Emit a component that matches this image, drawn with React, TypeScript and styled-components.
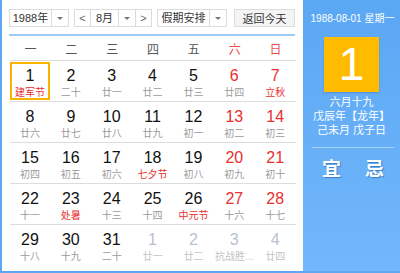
import React from 'react';
import styled, { createGlobalStyle } from 'styled-components';

const GlobalStyle = createGlobalStyle`
  html, body {
    margin: 0;
    padding: 0;
    background: #fff;
  }
  * {
    box-sizing: border-box;
  }
`;

const FONT = `"Liberation Sans", "Noto Sans CJK SC", sans-serif`;

const StyledWrapper = styled.div`
  display: flex;
  width: 400px;
  height: 273px;
  border-left: 2px solid #5ea8f3;
  border-bottom: 2px solid #5ea8f3;
  font-family: ${FONT};
  overflow: hidden;
`;

const StyledMain = styled.div`
  flex: 0 0 301px;
  background: #fff;
  padding: 9px 6px 0 7px;
`;

const StyledToolbar = styled.div`
  display: flex;
  align-items: center;
  height: 18px;
`;

const StyledSelect = styled.div<{ $width: number }>`
  display: flex;
  width: ${(p) => p.$width}px;
  height: 18px;
  margin-right: 5px;
  border: 1px solid #dcdcdc;
  background: #fff;
  font-size: 11px;
  color: #333;
`;

const StyledSelectText = styled.div`
  flex: 1;
  display: flex;
  align-items: center;
  justify-content: center;
  line-height: 16px;
`;

const StyledArrow = styled.div`
  flex: 0 0 17px;
  display: flex;
  align-items: center;
  justify-content: center;
  border-left: 1px solid #dcdcdc;
  &::after {
    content: '';
    border-left: 3px solid transparent;
    border-right: 3px solid transparent;
    border-top: 3px solid #777;
  }
`;

const StyledStep = styled.div<{ $side: 'left' | 'right' }>`
  flex: 0 0 16px;
  display: flex;
  align-items: center;
  justify-content: center;
  ${(p) => (p.$side === 'left' ? 'border-right' : 'border-left')}: 1px solid #dcdcdc;
  color: #666;
`;

const StyledButton = styled.div`
  width: 61px;
  height: 18px;
  margin-left: 2px;
  border: 1px solid #dcdcdc;
  background: #f4f4f4;
  font-size: 11px;
  color: #333;
  display: flex;
  align-items: center;
  justify-content: center;
`;

const StyledDivider = styled.div`
  width: 286px;
  height: 2px;
  margin-top: 7px;
  background: #9ecbf5;
`;

const StyledGrid = styled.div`
  display: grid;
  grid-template-columns: repeat(7, 1fr);
  width: 286px;
  margin-left: 1px;
`;

const StyledWeekday = styled.div<{ $weekend: boolean }>`
  height: 24px;
  display: flex;
  align-items: center;
  justify-content: center;
  font-size: 12px;
  color: ${(p) => (p.$weekend ? '#e8504f' : '#555')};
`;

const StyledWeekRow = styled.div`
  grid-column: 1 / -1;
  display: grid;
  grid-template-columns: repeat(7, 1fr);
  border-top: 1px solid #dcdcdc;
  height: 41px;
  padding-top: 1px;
`;

const StyledDay = styled.div<{ $selected: boolean }>`
  width: 40px;
  height: 38px;
  border: 2px solid ${(p) => (p.$selected ? '#f9b400' : 'transparent')};
  display: flex;
  flex-direction: column;
  align-items: center;
  padding-top: 3px;
`;

const StyledDayNumber = styled.div<{ $tone: 'normal' | 'red' | 'other' }>`
  font-size: 16px;
  line-height: 18px;
  color: ${(p) => (p.$tone === 'red' ? '#e8302e' : p.$tone === 'other' ? '#b9c2cc' : '#111')};
`;

const StyledLunar = styled.div<{ $tone: 'normal' | 'red' | 'other' }>`
  font-size: 10px;
  line-height: 13px;
  margin-top: 1px;
  white-space: nowrap;
  color: ${(p) => (p.$tone === 'red' ? '#e8302e' : p.$tone === 'other' ? '#c4c4c4' : '#9a9a9a')};
`;

const StyledSide = styled.div`
  flex: 1;
  background: linear-gradient(#5aa7f4, #72b7fb);
  display: flex;
  flex-direction: column;
  align-items: center;
  color: #fff;
  padding-top: 12px;
`;

const StyledSideDate = styled.div`
  font-size: 10px;
  line-height: 13px;
  white-space: nowrap;
  margin-left: 2px;
`;

const StyledBigDay = styled.div`
  width: 55px;
  height: 55px;
  margin-top: 12px;
  background: #ffbb00;
  font-size: 46px;
  line-height: 55px;
  text-align: center;
  box-shadow: 0 1px 2px rgba(0, 0, 0, 0.15);
`;

const StyledSideText = styled.div<{ $first?: boolean }>`
  font-size: 11px;
  line-height: 14px;
  white-space: nowrap;
  margin-top: ${(p) => (p.$first ? 3 : 0)}px;
`;

const StyledSideLine = styled.div`
  width: 82px;
  height: 1px;
  margin-top: 10px;
  margin-left: 3px;
  background: #a4d0fa;
`;

const StyledAdvice = styled.div`
  display: flex;
  gap: 24px;
  margin-top: 11px;
  margin-left: 3px;
  font-size: 19px;
  line-height: 22px;
  font-weight: bold;
  text-shadow: 1px 1px 1px #3b7fc5;
`;

type Tone = 'normal' | 'red' | 'other';

type Day = {
  n: number;
  lunar: string;
  festival?: boolean;
  other?: boolean;
};

const days: Day[] = [
  { n: 1, lunar: '建军节', festival: true },
  { n: 2, lunar: '二十' },
  { n: 3, lunar: '廿一' },
  { n: 4, lunar: '廿二' },
  { n: 5, lunar: '廿三' },
  { n: 6, lunar: '廿四' },
  { n: 7, lunar: '立秋', festival: true },
  { n: 8, lunar: '廿六' },
  { n: 9, lunar: '廿七' },
  { n: 10, lunar: '廿八' },
  { n: 11, lunar: '廿九' },
  { n: 12, lunar: '初一' },
  { n: 13, lunar: '初二' },
  { n: 14, lunar: '初三' },
  { n: 15, lunar: '初四' },
  { n: 16, lunar: '初五' },
  { n: 17, lunar: '初六' },
  { n: 18, lunar: '七夕节', festival: true },
  { n: 19, lunar: '初八' },
  { n: 20, lunar: '初九' },
  { n: 21, lunar: '初十' },
  { n: 22, lunar: '十一' },
  { n: 23, lunar: '处暑', festival: true },
  { n: 24, lunar: '十三' },
  { n: 25, lunar: '十四' },
  { n: 26, lunar: '中元节', festival: true },
  { n: 27, lunar: '十六' },
  { n: 28, lunar: '十七' },
  { n: 29, lunar: '十八' },
  { n: 30, lunar: '十九' },
  { n: 31, lunar: '二十' },
  { n: 1, lunar: '廿一', other: true },
  { n: 2, lunar: '廿二', other: true },
  { n: 3, lunar: '抗战胜...', other: true },
  { n: 4, lunar: '廿四', other: true },
];

const weekdays = ['一', '二', '三', '四', '五', '六', '日'];

const weeks: Day[][] = [];
for (let i = 0; i < days.length; i += 7) weeks.push(days.slice(i, i + 7));

const App: React.FC = () => (
  <>
    <GlobalStyle />
    <StyledWrapper>
      <StyledMain>
        <StyledToolbar>
          <StyledSelect $width={60}>
            <StyledSelectText>1988年</StyledSelectText>
            <StyledArrow />
          </StyledSelect>
          <StyledSelect $width={78}>
            <StyledStep $side="left">&lt;</StyledStep>
            <StyledSelectText>8月</StyledSelectText>
            <StyledArrow />
            <StyledStep $side="right">&gt;</StyledStep>
          </StyledSelect>
          <StyledSelect $width={70}>
            <StyledSelectText>假期安排</StyledSelectText>
            <StyledArrow />
          </StyledSelect>
          <StyledButton>返回今天</StyledButton>
        </StyledToolbar>
        <StyledDivider />
        <StyledGrid>
          {weekdays.map((w, i) => (
            <StyledWeekday key={w} $weekend={i >= 5}>
              {w}
            </StyledWeekday>
          ))}
          {weeks.map((week, wi) => (
            <StyledWeekRow key={wi}>
              {week.map((d, di) => {
                const numTone: Tone = d.other ? 'other' : di >= 5 ? 'red' : 'normal';
                const lunarTone: Tone = d.other ? 'other' : d.festival ? 'red' : 'normal';
                return (
                  <StyledDay key={di} $selected={wi === 0 && di === 0}>
                    <StyledDayNumber $tone={numTone}>{d.n}</StyledDayNumber>
                    <StyledLunar $tone={lunarTone}>{d.lunar}</StyledLunar>
                  </StyledDay>
                );
              })}
            </StyledWeekRow>
          ))}
        </StyledGrid>
      </StyledMain>
      <StyledSide>
        <StyledSideDate>1988-08-01 星期一</StyledSideDate>
        <StyledBigDay>1</StyledBigDay>
        <StyledSideText $first>六月十九</StyledSideText>
        <StyledSideText>戊辰年【龙年】</StyledSideText>
        <StyledSideText>己未月 戊子日</StyledSideText>
        <StyledSideLine />
        <StyledAdvice>
          <span>宜</span>
          <span>忌</span>
        </StyledAdvice>
      </StyledSide>
    </StyledWrapper>
  </>
);

export default App;
